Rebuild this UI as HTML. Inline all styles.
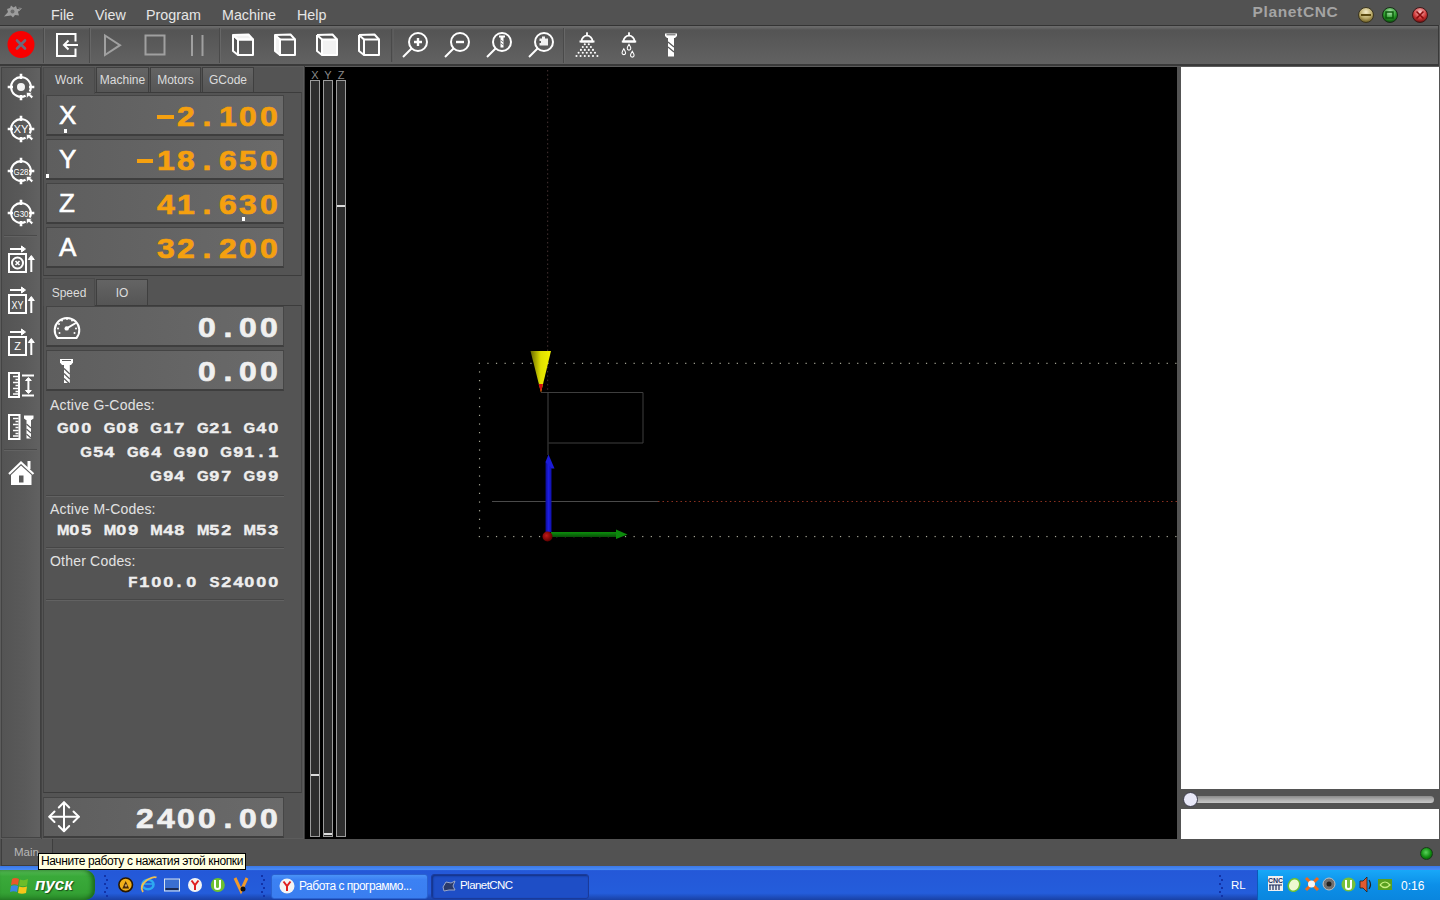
<!DOCTYPE html>
<html><head><meta charset="utf-8">
<style>
*{margin:0;padding:0;box-sizing:border-box}
html,body{width:1440px;height:900px;overflow:hidden;background:#5c5c5c;font-family:"Liberation Sans",sans-serif;position:relative}
.a{position:absolute}
#menubar{left:0;top:0;width:1440px;height:25px;background:#525252}
.mi{position:absolute;top:7px;font-size:14.3px;color:#e6e6e6}
#toolbar{left:0;top:25px;width:1439px;height:41px;border-right:1px solid #3a3a3a;background:linear-gradient(#6a6a6a 0,#6a6a6a 1px,#545454 4px,#5a5a5a 50%,#626262);border-top:1px solid #343434;border-bottom:2px solid #3a3a3a}
.sep{position:absolute;top:3px;width:2px;height:34px;background:#4c4c4c;border-right:1px solid #686868}
#leftcol{left:1px;top:67px;width:40px;height:771px;background:linear-gradient(90deg,#545454,#5a5a5a 60%,#616161);border:1px solid #444;border-right-color:#3e3e3e}
#panel{left:42px;top:67px;width:261px;height:771px;background:#545454}
#view{left:305px;top:67px;width:872px;height:772px;background:#000}
#rightp{left:1177px;top:67px;width:263px;height:772px;background:#535353}
#status{left:0;top:839px;width:1440px;height:27px;background:#525252}
#taskbar{left:0;top:866px;width:1440px;height:34px;background:linear-gradient(#3d81ee,#2458d8 15%,#245ddb 80%,#1941a5)}
.tab{position:absolute;height:26px;background:linear-gradient(#646464,#555);border:1px solid #3f3f3f;border-bottom:none;font-size:12px;color:#dcdcdc;text-align:center;line-height:24px}
.dro{position:absolute;left:46px;width:238px;height:41px;background:linear-gradient(90deg,#5e5e5e,#6a6a6a);border:1px solid #464646;border-top-color:#444;border-bottom:2px solid #3e3e3e}
.lbl{position:absolute;left:12px;top:4px;font-size:26px;line-height:30px;color:#fff;-webkit-text-stroke:0.6px #fff}
.val{position:absolute;right:4px;top:2.5px;font-weight:bold;font-size:28.5px;line-height:34px;color:#f5a00f;white-space:nowrap;-webkit-text-stroke:0.7px currentColor}
.val i,.code i{display:inline-block;text-align:center;font-style:normal}
.val b{display:inline-block;transform:scaleX(1.12)}
.code b{display:inline-block;transform:scaleX(1.2)}
.code b.L{transform:scaleX(1.0)}
.code{position:absolute;right:1161.5px;font-weight:bold;font-size:15px;-webkit-text-stroke:0.4px #eee;color:#eee;text-align:right;white-space:nowrap}
.ctitle{position:absolute;left:50px;font-size:14px;letter-spacing:0.2px;color:#e2e2e2}
.hr{position:absolute;left:46px;width:238px;height:2px;background:#464646;border-bottom:1px solid #626262}
</style></head><body>
<div id="menubar" class="a">
  <span class="mi" style="left:51px">File</span>
  <span class="mi" style="left:95px">View</span>
  <span class="mi" style="left:146px">Program</span>
  <span class="mi" style="left:222px">Machine</span>
  <span class="mi" style="left:297px">Help</span>
  <span class="a" style="left:1252.5px;top:3px;font-size:15.5px;letter-spacing:0.65px;font-weight:bold;color:#a4a4a4">PlanetCNC</span>
  <svg class="a" style="left:1340px;top:0" width="100" height="25" viewBox="1340 0 100 25">
   <defs>
    <radialGradient id="wy" cx="0.5" cy="0.3" r="0.7"><stop offset="0" stop-color="#f4ecc8"/><stop offset="0.6" stop-color="#b8a866"/><stop offset="1" stop-color="#6a5a20"/></radialGradient>
    <radialGradient id="wg" cx="0.5" cy="0.3" r="0.7"><stop offset="0" stop-color="#b8e8b8"/><stop offset="0.6" stop-color="#2a9a2a"/><stop offset="1" stop-color="#0a4a0a"/></radialGradient>
    <radialGradient id="wr" cx="0.5" cy="0.3" r="0.7"><stop offset="0" stop-color="#f8c8c8"/><stop offset="0.6" stop-color="#d03a3a"/><stop offset="1" stop-color="#6a0a0a"/></radialGradient>
   </defs>
   <circle cx="1366" cy="15" r="7.5" fill="url(#wy)" stroke="#3a3420" stroke-width="1"/>
   <rect x="1361" y="14" width="10" height="2" fill="#5a4a10"/>
   <circle cx="1390" cy="15" r="7.5" fill="url(#wg)" stroke="#1a2a1a" stroke-width="1"/>
   <rect x="1386" y="12" width="7" height="6" fill="none" stroke="#0a5a0a" stroke-width="1.5"/>
   <circle cx="1420" cy="15" r="7.5" fill="url(#wr)" stroke="#3a1a1a" stroke-width="1"/>
   <path d="M1416.5 11.5 L1423.5 18.5 M1423.5 11.5 L1416.5 18.5" stroke="#8a0a0a" stroke-width="1.6"/>
  </svg>
  <svg class="a" style="left:0;top:0" width="30" height="22" viewBox="0 0 30 22">
   <path d="M4 16.5 L8 12 L7 9 L10 8 L11 5.5 L13.5 7.5 L16 6 L17 9 L20 9 L18 12 L19 15.5 L15 15 L13 17.5 L11 15.5 Z" fill="#9c9c9c"/>
   <path d="M18.5 8 L21.5 8.5 L19 11" fill="none" stroke="#8a8a8a" stroke-width="1"/>
   <circle cx="12.5" cy="11.5" r="2" fill="#6a6a6a"/>
  </svg>
</div>
<div id="toolbar" class="a"></div>
<svg class="a" style="left:0;top:0" width="720" height="66" viewBox="0 0 720 66">
 <g fill="none" stroke="#fff" stroke-width="2">
  <!-- separators -->
 </g>
 <rect x="43" y="28" width="1" height="35" fill="#4a4a4a"/><rect x="44" y="28" width="1" height="35" fill="#676767"/>
 <rect x="89" y="28" width="1" height="35" fill="#4a4a4a"/><rect x="90" y="28" width="1" height="35" fill="#676767"/>
 <rect x="219" y="28" width="1" height="35" fill="#4a4a4a"/><rect x="220" y="28" width="1" height="35" fill="#676767"/>
 <rect x="391" y="29" width="1.5" height="33" fill="#4a4a4a"/><rect x="392.5" y="29" width="1" height="33" fill="#646464"/>
 <rect x="563" y="28" width="1" height="35" fill="#4a4a4a"/><rect x="564" y="28" width="1" height="35" fill="#676767"/>
 <!-- red stop -->
 <circle cx="21" cy="44.5" r="13.5" fill="#f80000"/>
 <path d="M17 40.5 L25 48.5 M25 40.5 L17 48.5" stroke="#6a6a7c" stroke-width="2.6" stroke-linecap="round"/>
 <!-- exit -->
 <path d="M75.5 41.5 V34 H57 V56 H75.5 V48.5" fill="none" stroke="#fff" stroke-width="2"/>
 <path d="M78 45 H64 M68.5 40.5 L64 45 L68.5 49.5" fill="none" stroke="#fff" stroke-width="2"/>
 <!-- play stop pause (gray) -->
 <path d="M105 35.5 V55 L120 45.2 Z" fill="none" stroke="#a0a0a0" stroke-width="2"/>
 <rect x="145.5" y="35.5" width="19" height="19" fill="none" stroke="#a0a0a0" stroke-width="2"/>
 <path d="M192 35 V56 M202.5 35 V56" stroke="#a0a0a0" stroke-width="2"/>
 <!-- cubes -->
 <g fill="none" stroke="#fff" stroke-width="2" stroke-linejoin="round">
  <g transform="translate(232,33.5)">
   <path d="M1 1.5 L16.5 1 L21 6 L6 6 Z" fill="#f2f2f2"/><path d="M6 6 H21 V21.5 H6 Z"/><path d="M1 1.5 V17.5 L6 21.5 M1 1.5 L6 6"/>
  </g>
  <g transform="translate(274,33.5)">
   <path d="M1 1.5 L6 6 V21.5 L1 17.5 Z" fill="#f2f2f2"/><path d="M6 6 H21 V21.5 H6 Z"/><path d="M1 1.5 L16.5 1 L21 6"/>
  </g>
  <g transform="translate(316,33.5)">
   <path d="M6 6 H21 V21.5 H6 Z" fill="#f2f2f2"/><path d="M1 1.5 L16.5 1 L21 6 M1 1.5 L6 6 M1 1.5 V17.5 L6 21.5"/>
  </g>
  <g transform="translate(358,33.5)">
   <path d="M6 6 H21 V21.5 H6 Z"/><path d="M1 1.5 L16.5 1 L21 6 M1 1.5 L6 6 M1 1.5 V17.5 L6 21.5"/>
  </g>
 </g>
 <!-- magnifiers -->
 <g fill="none" stroke="#fff" stroke-width="2">
  <circle cx="418" cy="42" r="9"/><path d="M411.5 48.5 L403 57"/>
  <circle cx="460" cy="42" r="9"/><path d="M453.5 48.5 L445 57"/>
  <circle cx="502" cy="42" r="9"/><path d="M495.5 48.5 L487 57"/>
  <circle cx="544" cy="42" r="9"/><path d="M537.5 48.5 L529 57"/>
  <path d="M418 38 V46 M414 42 H422" stroke-width="2.4"/>
  <path d="M456 42 H464" stroke-width="2.4"/>
 </g>
 <!-- tool in magnifier -->
 <path d="M499 35.5 H505 V37.5 H503.5 V47.5 H500.5 V37.5 H499 Z" fill="#fff"/>
 <path d="M500.5 40 L503.5 42 M500.5 43 L503.5 45" stroke="#5a5a5a" stroke-width="0.8"/>
 <!-- part in magnifier -->
 <path d="M539.5 38.5 H542 V36.5 H545 V38.5 H548 V45.5 H539.5 V43 H541 V41 H539.5 Z" fill="#f0f0f0"/>
 <!-- shower mist -->
 <path d="M581.5 41.5 A5.5 5.8 0 0 1 592.5 41.5 Z" fill="none" stroke="#fff" stroke-width="1.8"/>
 <path d="M579.5 41.5 H594.5" stroke="#fff" stroke-width="2"/>
 <rect x="586.1" y="32.3" width="1.8" height="3" fill="#fff"/>
 <g fill="#fff"><circle cx="584.8" cy="44.2" r="1.05"/><circle cx="588.8" cy="44.2" r="1.05"/><circle cx="582.8" cy="47" r="1.05"/><circle cx="586.8" cy="47" r="1.05"/><circle cx="590.9" cy="47" r="1.05"/><circle cx="580.9" cy="49.9" r="1.05"/><circle cx="584.8" cy="49.9" r="1.05"/><circle cx="588.8" cy="49.9" r="1.05"/><circle cx="593" cy="49.9" r="1.05"/><circle cx="578.6" cy="52.8" r="1.05"/><circle cx="582.8" cy="52.8" r="1.05"/><circle cx="586.8" cy="52.8" r="1.05"/><circle cx="590.9" cy="52.8" r="1.05"/><circle cx="595" cy="52.8" r="1.05"/><circle cx="576.5" cy="56" r="1.05"/><circle cx="580.6" cy="56" r="1.05"/><circle cx="584.8" cy="56" r="1.05"/><circle cx="588.8" cy="56" r="1.05"/><circle cx="593" cy="56" r="1.05"/><circle cx="597.4" cy="56" r="1.05"/></g>
 <!-- shower flood -->
 <path d="M623.5 41.5 A5.5 5.8 0 0 1 634.5 41.5 Z" fill="none" stroke="#fff" stroke-width="1.8"/>
 <path d="M621.8 41.5 H636.2" stroke="#fff" stroke-width="2"/>
 <rect x="628.1" y="32.3" width="1.8" height="3" fill="#fff"/>
 <g fill="none" stroke="#fff" stroke-width="1.1">
  <path d="M629 44.2 Q631 47.5 630.8 48.3 A1.8 1.8 0 0 1 627.2 48.3 Q627 47.5 629 44.2 Z"/>
  <path d="M623.8 48.7 Q625.8 52 625.6 52.8 A1.8 1.8 0 0 1 622 52.8 Q621.8 52 623.8 48.7 Z"/>
  <path d="M632.3 51.2 Q634.3 54.5 634.1 55.3 A1.8 1.8 0 0 1 630.5 55.3 Q630.3 54.5 632.3 51.2 Z"/>
 </g>
 <!-- end mill -->
 <path d="M665 33.5 H677 V36 L675 38 H667 L665 36 Z" fill="#fff"/>
 <path d="M666.5 34.8 H675.5" stroke="#5a5a5a" stroke-width="1"/>
 <rect x="668" y="38" width="6" height="18.5" fill="#fff"/>
 <path d="M668 42 L674 47 M668 47 L674 52" stroke="#5a5a5a" stroke-width="1.3"/>
</svg>
<div id="leftcol" class="a"></div>
<svg class="a" style="left:0;top:0" width="44" height="500" viewBox="0 0 44 500">
 <g transform="translate(21,87)">
  <path d="M4.6 8.7 A9.85 9.85 0 1 1 8.7 4.6" fill="none" stroke="#fff" stroke-width="2.1"/>
  <path d="M0 -13.3 V-8 M0 8 V13.3 M-13.3 0 H-8 M8 0 H13.3" stroke="#fff" stroke-width="2.6"/>
  <circle cx="0" cy="0" r="4" fill="#f4f4f4"/>
  <path d="M5.5 5.5 H11.2 L9.6 7.1 L12.3 9.8 L10.5 11.6 L7.8 8.9 L5.5 11.2 Z" fill="#fff" stroke="#5a5a5a" stroke-width="0.6"/>
 </g>
 <g transform="translate(21,129)">
  <path d="M4.6 8.7 A9.85 9.85 0 1 1 8.7 4.6" fill="none" stroke="#fff" stroke-width="2.1"/>
  <path d="M0 -13.3 V-8 M0 8 V13.3 M-13.3 0 H-8 M8 0 H13.3" stroke="#fff" stroke-width="2.6"/>
  <text x="0" y="4" font-size="11" fill="#fff" text-anchor="middle" font-family="Liberation Sans" textLength="15" lengthAdjust="spacingAndGlyphs">XY</text>
  <path d="M5.5 5.5 H11.2 L9.6 7.1 L12.3 9.8 L10.5 11.6 L7.8 8.9 L5.5 11.2 Z" fill="#fff" stroke="#5a5a5a" stroke-width="0.6"/>
 </g>
 <g transform="translate(21,171)">
  <path d="M4.6 8.7 A9.85 9.85 0 1 1 8.7 4.6" fill="none" stroke="#fff" stroke-width="2.1"/>
  <path d="M0 -13.3 V-8 M0 8 V13.3 M-13.3 0 H-8 M8 0 H13.3" stroke="#fff" stroke-width="2.6"/>
  <text x="0" y="3.5" font-size="9" fill="#fff" text-anchor="middle" font-family="Liberation Sans" textLength="15" lengthAdjust="spacingAndGlyphs">G28</text>
  <path d="M5.5 5.5 H11.2 L9.6 7.1 L12.3 9.8 L10.5 11.6 L7.8 8.9 L5.5 11.2 Z" fill="#fff" stroke="#5a5a5a" stroke-width="0.6"/>
 </g>
 <g transform="translate(21,213)">
  <path d="M4.6 8.7 A9.85 9.85 0 1 1 8.7 4.6" fill="none" stroke="#fff" stroke-width="2.1"/>
  <path d="M0 -13.3 V-8 M0 8 V13.3 M-13.3 0 H-8 M8 0 H13.3" stroke="#fff" stroke-width="2.6"/>
  <text x="0" y="3.5" font-size="9" fill="#fff" text-anchor="middle" font-family="Liberation Sans" textLength="15" lengthAdjust="spacingAndGlyphs">G30</text>
  <path d="M5.5 5.5 H11.2 L9.6 7.1 L12.3 9.8 L10.5 11.6 L7.8 8.9 L5.5 11.2 Z" fill="#fff" stroke="#5a5a5a" stroke-width="0.6"/>
 </g>
 <rect x="4" y="235" width="33" height="1" fill="#4a4a4a"/><rect x="4" y="236" width="33" height="1" fill="#626262"/>
 <rect x="4" y="449" width="33" height="1" fill="#4a4a4a"/><rect x="4" y="450" width="33" height="1" fill="#626262"/>
 <g fill="none" stroke="#fff" stroke-width="2">
  <!-- icon 5 -->
  <path d="M10 249 H22"/><path d="M21.5 246 L25.5 249 L21.5 252 Z" fill="#fff" stroke-width="1"/>
  <rect x="9" y="254" width="17" height="18"/>
  <circle cx="17.5" cy="263" r="5.5" stroke-width="2"/>
  <path d="M15.5 261 L19.5 265 M19.5 261 L15.5 265" stroke-width="1.6"/>
  <path d="M31.3 259 V272"/><path d="M28.3 259.5 L31.3 255.5 L34.3 259.5 Z" fill="#fff" stroke-width="1"/>
  <!-- icon 6 -->
  <path d="M10 290 H22"/><path d="M21.5 287 L25.5 290 L21.5 293 Z" fill="#fff" stroke-width="1"/>
  <rect x="9" y="295" width="17" height="18"/>
  <path d="M31.3 300 V313"/><path d="M28.3 300.5 L31.3 296.5 L34.3 300.5 Z" fill="#fff" stroke-width="1"/>
  <!-- icon 7 -->
  <path d="M10 332 H22"/><path d="M21.5 329 L25.5 332 L21.5 335 Z" fill="#fff" stroke-width="1"/>
  <rect x="9" y="337" width="17" height="18"/>
  <path d="M31.3 342 V355"/><path d="M28.3 342.5 L31.3 338.5 L34.3 342.5 Z" fill="#fff" stroke-width="1"/>
  <!-- icon 8 ruler -->
  <rect x="9" y="373" width="10" height="24"/>
  <path d="M13 376.5 H18 M15.5 379.5 H18 M13 382.5 H18 M15.5 385.5 H18 M13 388.5 H18 M15.5 391.5 H18 M13 394 H18" stroke-width="1.4"/>
  <path d="M22 375.5 H34 M22 395.5 H34 M28.4 379 V392"/>
  <path d="M25.5 380.5 L28.4 377.5 L31.3 380.5 Z M25.5 390.5 L28.4 393.5 L31.3 390.5 Z" fill="#fff" stroke-width="1"/>
  <!-- icon 9 -->
  <rect x="9" y="415" width="10.5" height="24"/>
  <path d="M13 418.5 H18.5 M15.5 421.5 H18.5 M13 424.5 H18.5 M15.5 427.5 H18.5 M13 430.5 H18.5 M15.5 433.5 H18.5 M13 436 H18.5" stroke-width="1.4"/>
 </g>
 <path d="M24 415.5 H33.5 V418.5 L31.5 420 H26 L24 418.5 Z" fill="#fff"/>
 <rect x="26.5" y="420" width="4.5" height="18.5" fill="#fff"/>
 <path d="M26.5 424 L31 428 M26.5 429 L31 433 M26.5 434 L31 438" stroke="#5a5a5a" stroke-width="1.1"/>
 <!-- house -->
 <path d="M9 474 L21 462.5 L33.5 474" fill="none" stroke="#fff" stroke-width="2.2"/>
 <rect x="27.5" y="461" width="3" height="8" fill="#fff"/>
 <path d="M11 475 L21 465.5 L31.5 475 V485 H11 Z" fill="#fff"/>
 <rect x="19" y="475.5" width="4.5" height="7" fill="#5a5a5a"/>
 <g font-family="Liberation Sans" fill="#fff" text-anchor="middle">
  <text x="17.5" y="308.5" font-size="11" textLength="12" lengthAdjust="spacingAndGlyphs">XY</text>
  <text x="17.5" y="350" font-size="11">Z</text>
 </g>
</svg>
<div id="panel" class="a"></div>
<div class="a" style="left:41px;top:66px;width:264px;height:773px;border-left:1px solid #444;border-right:1px solid #3a3a3a"></div>
<!-- tab row 1 -->
<div class="tab" style="left:43px;top:67px;width:52px;height:27px;padding-top:0;background:#545454;border-color:#4a4a4a;z-index:2">Work</div>
<div class="tab" style="left:96px;top:67px;width:53px;">Machine</div>
<div class="tab" style="left:150px;top:67px;width:51px;">Motors</div>
<div class="tab" style="left:202px;top:67px;width:52px;">GCode</div>
<div class="a" style="left:43px;top:92px;width:259px;height:184px;border:1px solid #444;border-top-color:#3c3c3c;border-bottom-color:#3c3c3c;background:#545454"></div>
<div class="dro" style="top:95px"><span class="lbl">X</span><span class="val"><i style="width:20.6px;position:relative;height:20px"><u style="position:absolute;left:2px;top:9.5px;width:16.5px;height:4px;background:currentColor"></u></i><i style="width:20.6px"><b>2</b></i><i style="width:20.6px"><b>.</b></i><i style="width:20.6px"><b>1</b></i><i style="width:20.6px"><b>0</b></i><i style="width:20.6px"><b>0</b></i></span></div>
<div class="dro" style="top:139px"><span class="lbl">Y</span><span class="val"><i style="width:20.6px;position:relative;height:20px"><u style="position:absolute;left:2px;top:9.5px;width:16.5px;height:4px;background:currentColor"></u></i><i style="width:20.6px"><b>1</b></i><i style="width:20.6px"><b>8</b></i><i style="width:20.6px"><b>.</b></i><i style="width:20.6px"><b>6</b></i><i style="width:20.6px"><b>5</b></i><i style="width:20.6px"><b>0</b></i></span></div>
<div class="dro" style="top:183px"><span class="lbl">Z</span><span class="val"><i style="width:20.6px"><b>4</b></i><i style="width:20.6px"><b>1</b></i><i style="width:20.6px"><b>.</b></i><i style="width:20.6px"><b>6</b></i><i style="width:20.6px"><b>3</b></i><i style="width:20.6px"><b>0</b></i></span></div>
<div class="dro" style="top:227px"><span class="lbl">A</span><span class="val"><i style="width:20.6px"><b>3</b></i><i style="width:20.6px"><b>2</b></i><i style="width:20.6px"><b>.</b></i><i style="width:20.6px"><b>2</b></i><i style="width:20.6px"><b>0</b></i><i style="width:20.6px"><b>0</b></i></span></div>
<div class="a" style="left:64px;top:129px;width:3px;height:4px;background:#fff;z-index:5"></div>
<div class="a" style="left:46px;top:174px;width:3px;height:4px;background:#fff;z-index:5"></div>
<div class="a" style="left:242px;top:217px;width:3px;height:4px;background:#fff;z-index:5"></div>
<!-- tab row 2 -->
<div class="tab" style="left:43px;top:278px;width:52px;height:28px;padding-top:2px;background:#545454;border-color:#4a4a4a;z-index:2">Speed</div>
<div class="tab" style="left:96px;top:279px;width:52px;padding-top:1px">IO</div>
<div class="a" style="left:43px;top:305px;width:259px;height:488px;border:1px solid #444;border-top-color:#3c3c3c;border-bottom-color:#3c3c3c;background:#545454"></div>
<svg class="a" style="left:50px;top:310px;z-index:3" width="35" height="80" viewBox="50 310 35 80">
 <path d="M57.5 338 A12.3 12.3 0 1 1 76.5 338 Z" fill="none" stroke="#fff" stroke-width="2" stroke-linejoin="round"/>
 <g fill="#fff"><circle cx="67" cy="319" r="1"/><circle cx="62" cy="320.5" r="1"/><circle cx="72" cy="320.5" r="1"/><circle cx="59" cy="324" r="1"/><circle cx="58" cy="328.5" r="1"/><circle cx="59.5" cy="333" r="1"/><circle cx="76" cy="328.5" r="1"/><circle cx="74.5" cy="333" r="1"/></g>
 <circle cx="66.7" cy="328.4" r="2.2" fill="#fff"/>
 <path d="M66.7 328.4 L75 323.5" stroke="#fff" stroke-width="2" stroke-linecap="round"/>
 <path d="M60 359 H73 V362.5 L71 365 H62 L60 362.5 Z" fill="#fff"/>
 <path d="M62 360.5 H71" stroke="#5e5e5e" stroke-width="1"/>
 <rect x="64" y="365" width="5.8" height="18" fill="#fff"/>
 <path d="M64 368.5 L69.8 374 M64 373.5 L69.8 379 M64 378.5 L69.8 384" stroke="#5e5e5e" stroke-width="1.3"/>
</svg>
<svg class="a" style="left:44px;top:796px;z-index:3" width="40" height="40" viewBox="44 796 40 40">
 <g fill="none" stroke="#fff" stroke-width="2" stroke-linecap="round" stroke-linejoin="round">
  <path d="M64 802.5 V831 M49.5 816.8 H78.8"/>
  <path d="M58.8 807.5 L64 802.3 L69.2 807.5 M58.8 826 L64 831.2 L69.2 826 M54.5 811.5 L49.3 816.8 L54.5 822 M73.5 811.5 L78.8 816.8 L73.5 822"/>
 </g>
</svg>
<div class="dro" style="top:306px"><span class="val" style="color:#f0f0f0"><i style="width:20.6px"><b>0</b></i><i style="width:20.6px"><b>.</b></i><i style="width:20.6px"><b>0</b></i><i style="width:20.6px"><b>0</b></i></span></div>
<div class="dro" style="top:350px"><span class="val" style="color:#f0f0f0"><i style="width:20.6px"><b>0</b></i><i style="width:20.6px"><b>.</b></i><i style="width:20.6px"><b>0</b></i><i style="width:20.6px"><b>0</b></i></span></div>
<span class="ctitle" style="top:397px">Active G-Codes:</span>
<div class="code" style="top:416px;line-height:24px"><i style="width:11.67px"><b class="L">G</b></i><i style="width:11.67px"><b>0</b></i><i style="width:11.67px"><b>0</b></i><i style="width:11.67px"> </i><i style="width:11.67px"><b class="L">G</b></i><i style="width:11.67px"><b>0</b></i><i style="width:11.67px"><b>8</b></i><i style="width:11.67px"> </i><i style="width:11.67px"><b class="L">G</b></i><i style="width:11.67px"><b>1</b></i><i style="width:11.67px"><b>7</b></i><i style="width:11.67px"> </i><i style="width:11.67px"><b class="L">G</b></i><i style="width:11.67px"><b>2</b></i><i style="width:11.67px"><b>1</b></i><i style="width:11.67px"> </i><i style="width:11.67px"><b class="L">G</b></i><i style="width:11.67px"><b>4</b></i><i style="width:11.67px"><b>0</b></i><br><i style="width:11.67px"><b class="L">G</b></i><i style="width:11.67px"><b>5</b></i><i style="width:11.67px"><b>4</b></i><i style="width:11.67px"> </i><i style="width:11.67px"><b class="L">G</b></i><i style="width:11.67px"><b>6</b></i><i style="width:11.67px"><b>4</b></i><i style="width:11.67px"> </i><i style="width:11.67px"><b class="L">G</b></i><i style="width:11.67px"><b>9</b></i><i style="width:11.67px"><b>0</b></i><i style="width:11.67px"> </i><i style="width:11.67px"><b class="L">G</b></i><i style="width:11.67px"><b>9</b></i><i style="width:11.67px"><b>1</b></i><i style="width:11.67px"><b>.</b></i><i style="width:11.67px"><b>1</b></i><br><i style="width:11.67px"><b class="L">G</b></i><i style="width:11.67px"><b>9</b></i><i style="width:11.67px"><b>4</b></i><i style="width:11.67px"> </i><i style="width:11.67px"><b class="L">G</b></i><i style="width:11.67px"><b>9</b></i><i style="width:11.67px"><b>7</b></i><i style="width:11.67px"> </i><i style="width:11.67px"><b class="L">G</b></i><i style="width:11.67px"><b>9</b></i><i style="width:11.67px"><b>9</b></i></div>
<div class="hr" style="top:495px"></div>
<span class="ctitle" style="top:501px">Active M-Codes:</span>
<div class="code" style="top:518px;line-height:24px"><i style="width:11.67px"><b class="L">M</b></i><i style="width:11.67px"><b>0</b></i><i style="width:11.67px"><b>5</b></i><i style="width:11.67px"> </i><i style="width:11.67px"><b class="L">M</b></i><i style="width:11.67px"><b>0</b></i><i style="width:11.67px"><b>9</b></i><i style="width:11.67px"> </i><i style="width:11.67px"><b class="L">M</b></i><i style="width:11.67px"><b>4</b></i><i style="width:11.67px"><b>8</b></i><i style="width:11.67px"> </i><i style="width:11.67px"><b class="L">M</b></i><i style="width:11.67px"><b>5</b></i><i style="width:11.67px"><b>2</b></i><i style="width:11.67px"> </i><i style="width:11.67px"><b class="L">M</b></i><i style="width:11.67px"><b>5</b></i><i style="width:11.67px"><b>3</b></i></div>
<div class="hr" style="top:547px"></div>
<span class="ctitle" style="top:553px">Other Codes:</span>
<div class="code" style="top:570px;line-height:24px"><i style="width:11.67px"><b class="L">F</b></i><i style="width:11.67px"><b>1</b></i><i style="width:11.67px"><b>0</b></i><i style="width:11.67px"><b>0</b></i><i style="width:11.67px"><b>.</b></i><i style="width:11.67px"><b>0</b></i><i style="width:11.67px"> </i><i style="width:11.67px"><b class="L">S</b></i><i style="width:11.67px"><b>2</b></i><i style="width:11.67px"><b>4</b></i><i style="width:11.67px"><b>0</b></i><i style="width:11.67px"><b>0</b></i><i style="width:11.67px"><b>0</b></i></div>
<div class="hr" style="top:599px"></div>
<div class="dro" style="left:43px;width:241px;top:797px"><span class="val" style="color:#f0f0f0"><i style="width:20.6px"><b>2</b></i><i style="width:20.6px"><b>4</b></i><i style="width:20.6px"><b>0</b></i><i style="width:20.6px"><b>0</b></i><i style="width:20.6px"><b>.</b></i><i style="width:20.6px"><b>0</b></i><i style="width:20.6px"><b>0</b></i></span></div>

<div id="view" class="a"></div>
<svg class="a" style="left:305px;top:67px" width="872" height="772" viewBox="305 67 872 772">
 <!-- axis bars -->
 <g fill="#2e2e2e" stroke="#9c9c9c" stroke-width="1">
  <rect x="310.5" y="80.5" width="9" height="756"/>
  <rect x="323.5" y="80.5" width="9" height="756"/>
  <rect x="336.5" y="80.5" width="9" height="756"/>
 </g>
 <rect x="311" y="774" width="8" height="2" fill="#ddd"/>
 <rect x="324" y="833" width="8" height="2" fill="#ddd"/>
 <rect x="337" y="205" width="8" height="2" fill="#ddd"/>
 <g font-family="Liberation Sans" font-size="11" fill="#8a8a8a" text-anchor="middle">
  <text x="315" y="79">X</text><text x="328" y="79">Y</text><text x="341" y="79">Z</text>
 </g>
 <g fill="#a8a898"><rect x="478.75" y="362.75" width="1.2" height="1.2"/><rect x="478.75" y="535.95" width="1.2" height="1.2"/><rect x="487.35" y="362.75" width="1.2" height="1.2"/><rect x="487.35" y="535.95" width="1.2" height="1.2"/><rect x="495.95" y="362.75" width="1.2" height="1.2"/><rect x="495.95" y="535.95" width="1.2" height="1.2"/><rect x="504.55" y="362.75" width="1.2" height="1.2"/><rect x="504.55" y="535.95" width="1.2" height="1.2"/><rect x="513.15" y="362.75" width="1.2" height="1.2"/><rect x="513.15" y="535.95" width="1.2" height="1.2"/><rect x="521.75" y="362.75" width="1.2" height="1.2"/><rect x="521.75" y="535.95" width="1.2" height="1.2"/><rect x="530.35" y="362.75" width="1.2" height="1.2"/><rect x="530.35" y="535.95" width="1.2" height="1.2"/><rect x="538.95" y="362.75" width="1.2" height="1.2"/><rect x="538.95" y="535.95" width="1.2" height="1.2"/><rect x="547.55" y="362.75" width="1.2" height="1.2"/><rect x="547.55" y="535.95" width="1.2" height="1.2"/><rect x="556.15" y="362.75" width="1.2" height="1.2"/><rect x="556.15" y="535.95" width="1.2" height="1.2"/><rect x="564.75" y="362.75" width="1.2" height="1.2"/><rect x="564.75" y="535.95" width="1.2" height="1.2"/><rect x="573.35" y="362.75" width="1.2" height="1.2"/><rect x="573.35" y="535.95" width="1.2" height="1.2"/><rect x="581.95" y="362.75" width="1.2" height="1.2"/><rect x="581.95" y="535.95" width="1.2" height="1.2"/><rect x="590.55" y="362.75" width="1.2" height="1.2"/><rect x="590.55" y="535.95" width="1.2" height="1.2"/><rect x="599.15" y="362.75" width="1.2" height="1.2"/><rect x="599.15" y="535.95" width="1.2" height="1.2"/><rect x="607.75" y="362.75" width="1.2" height="1.2"/><rect x="607.75" y="535.95" width="1.2" height="1.2"/><rect x="616.35" y="362.75" width="1.2" height="1.2"/><rect x="616.35" y="535.95" width="1.2" height="1.2"/><rect x="624.95" y="362.75" width="1.2" height="1.2"/><rect x="624.95" y="535.95" width="1.2" height="1.2"/><rect x="633.55" y="362.75" width="1.2" height="1.2"/><rect x="633.55" y="535.95" width="1.2" height="1.2"/><rect x="642.15" y="362.75" width="1.2" height="1.2"/><rect x="642.15" y="535.95" width="1.2" height="1.2"/><rect x="650.75" y="362.75" width="1.2" height="1.2"/><rect x="650.75" y="535.95" width="1.2" height="1.2"/><rect x="659.35" y="362.75" width="1.2" height="1.2"/><rect x="659.35" y="535.95" width="1.2" height="1.2"/><rect x="667.95" y="362.75" width="1.2" height="1.2"/><rect x="667.95" y="535.95" width="1.2" height="1.2"/><rect x="676.55" y="362.75" width="1.2" height="1.2"/><rect x="676.55" y="535.95" width="1.2" height="1.2"/><rect x="685.15" y="362.75" width="1.2" height="1.2"/><rect x="685.15" y="535.95" width="1.2" height="1.2"/><rect x="693.75" y="362.75" width="1.2" height="1.2"/><rect x="693.75" y="535.95" width="1.2" height="1.2"/><rect x="702.35" y="362.75" width="1.2" height="1.2"/><rect x="702.35" y="535.95" width="1.2" height="1.2"/><rect x="710.95" y="362.75" width="1.2" height="1.2"/><rect x="710.95" y="535.95" width="1.2" height="1.2"/><rect x="719.55" y="362.75" width="1.2" height="1.2"/><rect x="719.55" y="535.95" width="1.2" height="1.2"/><rect x="728.15" y="362.75" width="1.2" height="1.2"/><rect x="728.15" y="535.95" width="1.2" height="1.2"/><rect x="736.75" y="362.75" width="1.2" height="1.2"/><rect x="736.75" y="535.95" width="1.2" height="1.2"/><rect x="745.35" y="362.75" width="1.2" height="1.2"/><rect x="745.35" y="535.95" width="1.2" height="1.2"/><rect x="753.95" y="362.75" width="1.2" height="1.2"/><rect x="753.95" y="535.95" width="1.2" height="1.2"/><rect x="762.55" y="362.75" width="1.2" height="1.2"/><rect x="762.55" y="535.95" width="1.2" height="1.2"/><rect x="771.15" y="362.75" width="1.2" height="1.2"/><rect x="771.15" y="535.95" width="1.2" height="1.2"/><rect x="779.75" y="362.75" width="1.2" height="1.2"/><rect x="779.75" y="535.95" width="1.2" height="1.2"/><rect x="788.35" y="362.75" width="1.2" height="1.2"/><rect x="788.35" y="535.95" width="1.2" height="1.2"/><rect x="796.95" y="362.75" width="1.2" height="1.2"/><rect x="796.95" y="535.95" width="1.2" height="1.2"/><rect x="805.55" y="362.75" width="1.2" height="1.2"/><rect x="805.55" y="535.95" width="1.2" height="1.2"/><rect x="814.15" y="362.75" width="1.2" height="1.2"/><rect x="814.15" y="535.95" width="1.2" height="1.2"/><rect x="822.75" y="362.75" width="1.2" height="1.2"/><rect x="822.75" y="535.95" width="1.2" height="1.2"/><rect x="831.35" y="362.75" width="1.2" height="1.2"/><rect x="831.35" y="535.95" width="1.2" height="1.2"/><rect x="839.95" y="362.75" width="1.2" height="1.2"/><rect x="839.95" y="535.95" width="1.2" height="1.2"/><rect x="848.55" y="362.75" width="1.2" height="1.2"/><rect x="848.55" y="535.95" width="1.2" height="1.2"/><rect x="857.15" y="362.75" width="1.2" height="1.2"/><rect x="857.15" y="535.95" width="1.2" height="1.2"/><rect x="865.75" y="362.75" width="1.2" height="1.2"/><rect x="865.75" y="535.95" width="1.2" height="1.2"/><rect x="874.35" y="362.75" width="1.2" height="1.2"/><rect x="874.35" y="535.95" width="1.2" height="1.2"/><rect x="882.95" y="362.75" width="1.2" height="1.2"/><rect x="882.95" y="535.95" width="1.2" height="1.2"/><rect x="891.55" y="362.75" width="1.2" height="1.2"/><rect x="891.55" y="535.95" width="1.2" height="1.2"/><rect x="900.15" y="362.75" width="1.2" height="1.2"/><rect x="900.15" y="535.95" width="1.2" height="1.2"/><rect x="908.75" y="362.75" width="1.2" height="1.2"/><rect x="908.75" y="535.95" width="1.2" height="1.2"/><rect x="917.35" y="362.75" width="1.2" height="1.2"/><rect x="917.35" y="535.95" width="1.2" height="1.2"/><rect x="925.95" y="362.75" width="1.2" height="1.2"/><rect x="925.95" y="535.95" width="1.2" height="1.2"/><rect x="934.55" y="362.75" width="1.2" height="1.2"/><rect x="934.55" y="535.95" width="1.2" height="1.2"/><rect x="943.15" y="362.75" width="1.2" height="1.2"/><rect x="943.15" y="535.95" width="1.2" height="1.2"/><rect x="951.75" y="362.75" width="1.2" height="1.2"/><rect x="951.75" y="535.95" width="1.2" height="1.2"/><rect x="960.35" y="362.75" width="1.2" height="1.2"/><rect x="960.35" y="535.95" width="1.2" height="1.2"/><rect x="968.95" y="362.75" width="1.2" height="1.2"/><rect x="968.95" y="535.95" width="1.2" height="1.2"/><rect x="977.55" y="362.75" width="1.2" height="1.2"/><rect x="977.55" y="535.95" width="1.2" height="1.2"/><rect x="986.15" y="362.75" width="1.2" height="1.2"/><rect x="986.15" y="535.95" width="1.2" height="1.2"/><rect x="994.75" y="362.75" width="1.2" height="1.2"/><rect x="994.75" y="535.95" width="1.2" height="1.2"/><rect x="1003.35" y="362.75" width="1.2" height="1.2"/><rect x="1003.35" y="535.95" width="1.2" height="1.2"/><rect x="1011.95" y="362.75" width="1.2" height="1.2"/><rect x="1011.95" y="535.95" width="1.2" height="1.2"/><rect x="1020.55" y="362.75" width="1.2" height="1.2"/><rect x="1020.55" y="535.95" width="1.2" height="1.2"/><rect x="1029.15" y="362.75" width="1.2" height="1.2"/><rect x="1029.15" y="535.95" width="1.2" height="1.2"/><rect x="1037.75" y="362.75" width="1.2" height="1.2"/><rect x="1037.75" y="535.95" width="1.2" height="1.2"/><rect x="1046.35" y="362.75" width="1.2" height="1.2"/><rect x="1046.35" y="535.95" width="1.2" height="1.2"/><rect x="1054.95" y="362.75" width="1.2" height="1.2"/><rect x="1054.95" y="535.95" width="1.2" height="1.2"/><rect x="1063.55" y="362.75" width="1.2" height="1.2"/><rect x="1063.55" y="535.95" width="1.2" height="1.2"/><rect x="1072.15" y="362.75" width="1.2" height="1.2"/><rect x="1072.15" y="535.95" width="1.2" height="1.2"/><rect x="1080.75" y="362.75" width="1.2" height="1.2"/><rect x="1080.75" y="535.95" width="1.2" height="1.2"/><rect x="1089.35" y="362.75" width="1.2" height="1.2"/><rect x="1089.35" y="535.95" width="1.2" height="1.2"/><rect x="1097.95" y="362.75" width="1.2" height="1.2"/><rect x="1097.95" y="535.95" width="1.2" height="1.2"/><rect x="1106.55" y="362.75" width="1.2" height="1.2"/><rect x="1106.55" y="535.95" width="1.2" height="1.2"/><rect x="1115.15" y="362.75" width="1.2" height="1.2"/><rect x="1115.15" y="535.95" width="1.2" height="1.2"/><rect x="1123.75" y="362.75" width="1.2" height="1.2"/><rect x="1123.75" y="535.95" width="1.2" height="1.2"/><rect x="1132.35" y="362.75" width="1.2" height="1.2"/><rect x="1132.35" y="535.95" width="1.2" height="1.2"/><rect x="1140.95" y="362.75" width="1.2" height="1.2"/><rect x="1140.95" y="535.95" width="1.2" height="1.2"/><rect x="1149.55" y="362.75" width="1.2" height="1.2"/><rect x="1149.55" y="535.95" width="1.2" height="1.2"/><rect x="1158.15" y="362.75" width="1.2" height="1.2"/><rect x="1158.15" y="535.95" width="1.2" height="1.2"/><rect x="1166.65" y="362.75" width="1.2" height="1.2"/><rect x="1166.65" y="535.95" width="1.2" height="1.2"/><rect x="1175.25" y="362.75" width="1.2" height="1.2"/><rect x="1175.25" y="535.95" width="1.2" height="1.2"/><rect x="478.95" y="371.35" width="1.2" height="1.2"/><rect x="478.95" y="380.05" width="1.2" height="1.2"/><rect x="478.95" y="388.75" width="1.2" height="1.2"/><rect x="478.95" y="397.45" width="1.2" height="1.2"/><rect x="478.95" y="406.05" width="1.2" height="1.2"/><rect x="478.95" y="414.75" width="1.2" height="1.2"/><rect x="478.95" y="423.45" width="1.2" height="1.2"/><rect x="478.95" y="432.05" width="1.2" height="1.2"/><rect x="478.95" y="440.75" width="1.2" height="1.2"/><rect x="478.95" y="449.45" width="1.2" height="1.2"/><rect x="478.95" y="458.15" width="1.2" height="1.2"/><rect x="478.95" y="466.75" width="1.2" height="1.2"/><rect x="478.95" y="475.45" width="1.2" height="1.2"/><rect x="478.95" y="484.15" width="1.2" height="1.2"/><rect x="478.95" y="492.75" width="1.2" height="1.2"/><rect x="478.95" y="501.45" width="1.2" height="1.2"/><rect x="478.95" y="510.15" width="1.2" height="1.2"/><rect x="478.95" y="518.75" width="1.2" height="1.2"/><rect x="478.95" y="527.45" width="1.2" height="1.2"/></g>
 <g fill="#8a3020"><rect x="658.0" y="501" width="1.5" height="1" /><rect x="662.5" y="501" width="1.5" height="1" /><rect x="667.0" y="501" width="1.5" height="1" /><rect x="671.5" y="501" width="1.5" height="1" /><rect x="676.0" y="501" width="1.5" height="1" /><rect x="680.5" y="501" width="1.5" height="1" /><rect x="685.0" y="501" width="1.5" height="1" /><rect x="689.5" y="501" width="1.5" height="1" /><rect x="694.0" y="501" width="1.5" height="1" /><rect x="698.5" y="501" width="1.5" height="1" /><rect x="703.0" y="501" width="1.5" height="1" /><rect x="707.5" y="501" width="1.5" height="1" /><rect x="712.0" y="501" width="1.5" height="1" /><rect x="716.5" y="501" width="1.5" height="1" /><rect x="721.0" y="501" width="1.5" height="1" /><rect x="725.5" y="501" width="1.5" height="1" /><rect x="730.0" y="501" width="1.5" height="1" /><rect x="734.5" y="501" width="1.5" height="1" /><rect x="739.0" y="501" width="1.5" height="1" /><rect x="743.5" y="501" width="1.5" height="1" /><rect x="748.0" y="501" width="1.5" height="1" /><rect x="752.5" y="501" width="1.5" height="1" /><rect x="757.0" y="501" width="1.5" height="1" /><rect x="761.5" y="501" width="1.5" height="1" /><rect x="766.0" y="501" width="1.5" height="1" /><rect x="770.5" y="501" width="1.5" height="1" /><rect x="775.0" y="501" width="1.5" height="1" /><rect x="779.5" y="501" width="1.5" height="1" /><rect x="784.0" y="501" width="1.5" height="1" /><rect x="788.5" y="501" width="1.5" height="1" /><rect x="793.0" y="501" width="1.5" height="1" /><rect x="797.5" y="501" width="1.5" height="1" /><rect x="802.0" y="501" width="1.5" height="1" /><rect x="806.5" y="501" width="1.5" height="1" /><rect x="811.0" y="501" width="1.5" height="1" /><rect x="815.5" y="501" width="1.5" height="1" /><rect x="820.0" y="501" width="1.5" height="1" /><rect x="824.5" y="501" width="1.5" height="1" /><rect x="829.0" y="501" width="1.5" height="1" /><rect x="833.5" y="501" width="1.5" height="1" /><rect x="838.0" y="501" width="1.5" height="1" /><rect x="842.5" y="501" width="1.5" height="1" /><rect x="847.0" y="501" width="1.5" height="1" /><rect x="851.5" y="501" width="1.5" height="1" /><rect x="856.0" y="501" width="1.5" height="1" /><rect x="860.5" y="501" width="1.5" height="1" /><rect x="865.0" y="501" width="1.5" height="1" /><rect x="869.5" y="501" width="1.5" height="1" /><rect x="874.0" y="501" width="1.5" height="1" /><rect x="878.5" y="501" width="1.5" height="1" /><rect x="883.0" y="501" width="1.5" height="1" /><rect x="887.5" y="501" width="1.5" height="1" /><rect x="892.0" y="501" width="1.5" height="1" /><rect x="896.5" y="501" width="1.5" height="1" /><rect x="901.0" y="501" width="1.5" height="1" /><rect x="905.5" y="501" width="1.5" height="1" /><rect x="910.0" y="501" width="1.5" height="1" /><rect x="914.5" y="501" width="1.5" height="1" /><rect x="919.0" y="501" width="1.5" height="1" /><rect x="923.5" y="501" width="1.5" height="1" /><rect x="928.0" y="501" width="1.5" height="1" /><rect x="932.5" y="501" width="1.5" height="1" /><rect x="937.0" y="501" width="1.5" height="1" /><rect x="941.5" y="501" width="1.5" height="1" /><rect x="946.0" y="501" width="1.5" height="1" /><rect x="950.5" y="501" width="1.5" height="1" /><rect x="955.0" y="501" width="1.5" height="1" /><rect x="959.5" y="501" width="1.5" height="1" /><rect x="964.0" y="501" width="1.5" height="1" /><rect x="968.5" y="501" width="1.5" height="1" /><rect x="973.0" y="501" width="1.5" height="1" /><rect x="977.5" y="501" width="1.5" height="1" /><rect x="982.0" y="501" width="1.5" height="1" /><rect x="986.5" y="501" width="1.5" height="1" /><rect x="991.0" y="501" width="1.5" height="1" /><rect x="995.5" y="501" width="1.5" height="1" /><rect x="1000.0" y="501" width="1.5" height="1" /><rect x="1004.5" y="501" width="1.5" height="1" /><rect x="1009.0" y="501" width="1.5" height="1" /><rect x="1013.5" y="501" width="1.5" height="1" /><rect x="1018.0" y="501" width="1.5" height="1" /><rect x="1022.5" y="501" width="1.5" height="1" /><rect x="1027.0" y="501" width="1.5" height="1" /><rect x="1031.5" y="501" width="1.5" height="1" /><rect x="1036.0" y="501" width="1.5" height="1" /><rect x="1040.5" y="501" width="1.5" height="1" /><rect x="1045.0" y="501" width="1.5" height="1" /><rect x="1049.5" y="501" width="1.5" height="1" /><rect x="1054.0" y="501" width="1.5" height="1" /><rect x="1058.5" y="501" width="1.5" height="1" /><rect x="1063.0" y="501" width="1.5" height="1" /><rect x="1067.5" y="501" width="1.5" height="1" /><rect x="1072.0" y="501" width="1.5" height="1" /><rect x="1076.5" y="501" width="1.5" height="1" /><rect x="1081.0" y="501" width="1.5" height="1" /><rect x="1085.5" y="501" width="1.5" height="1" /><rect x="1090.0" y="501" width="1.5" height="1" /><rect x="1094.5" y="501" width="1.5" height="1" /><rect x="1099.0" y="501" width="1.5" height="1" /><rect x="1103.5" y="501" width="1.5" height="1" /><rect x="1108.0" y="501" width="1.5" height="1" /><rect x="1112.5" y="501" width="1.5" height="1" /><rect x="1117.0" y="501" width="1.5" height="1" /><rect x="1121.5" y="501" width="1.5" height="1" /><rect x="1126.0" y="501" width="1.5" height="1" /><rect x="1130.5" y="501" width="1.5" height="1" /><rect x="1135.0" y="501" width="1.5" height="1" /><rect x="1139.5" y="501" width="1.5" height="1" /><rect x="1144.0" y="501" width="1.5" height="1" /><rect x="1148.5" y="501" width="1.5" height="1" /><rect x="1153.0" y="501" width="1.5" height="1" /><rect x="1157.5" y="501" width="1.5" height="1" /><rect x="1162.0" y="501" width="1.5" height="1" /><rect x="1166.5" y="501" width="1.5" height="1" /><rect x="1171.0" y="501" width="1.5" height="1" /><rect x="1175.5" y="501" width="1.5" height="1" /></g>
 <g fill="#3a2a2a"><rect x="547" y="70.0" width="1.2" height="1.5"/><rect x="547" y="74.3" width="1.2" height="1.5"/><rect x="547" y="78.6" width="1.2" height="1.5"/><rect x="547" y="82.9" width="1.2" height="1.5"/><rect x="547" y="87.2" width="1.2" height="1.5"/><rect x="547" y="91.5" width="1.2" height="1.5"/><rect x="547" y="95.8" width="1.2" height="1.5"/><rect x="547" y="100.1" width="1.2" height="1.5"/><rect x="547" y="104.4" width="1.2" height="1.5"/><rect x="547" y="108.7" width="1.2" height="1.5"/><rect x="547" y="113.0" width="1.2" height="1.5"/><rect x="547" y="117.3" width="1.2" height="1.5"/><rect x="547" y="121.6" width="1.2" height="1.5"/><rect x="547" y="125.9" width="1.2" height="1.5"/><rect x="547" y="130.2" width="1.2" height="1.5"/><rect x="547" y="134.5" width="1.2" height="1.5"/><rect x="547" y="138.8" width="1.2" height="1.5"/><rect x="547" y="143.1" width="1.2" height="1.5"/><rect x="547" y="147.4" width="1.2" height="1.5"/><rect x="547" y="151.7" width="1.2" height="1.5"/><rect x="547" y="156.0" width="1.2" height="1.5"/><rect x="547" y="160.3" width="1.2" height="1.5"/><rect x="547" y="164.6" width="1.2" height="1.5"/><rect x="547" y="168.9" width="1.2" height="1.5"/><rect x="547" y="173.2" width="1.2" height="1.5"/><rect x="547" y="177.5" width="1.2" height="1.5"/><rect x="547" y="181.8" width="1.2" height="1.5"/><rect x="547" y="186.1" width="1.2" height="1.5"/><rect x="547" y="190.4" width="1.2" height="1.5"/><rect x="547" y="194.7" width="1.2" height="1.5"/><rect x="547" y="199.0" width="1.2" height="1.5"/><rect x="547" y="203.3" width="1.2" height="1.5"/><rect x="547" y="207.6" width="1.2" height="1.5"/><rect x="547" y="211.9" width="1.2" height="1.5"/><rect x="547" y="216.2" width="1.2" height="1.5"/><rect x="547" y="220.5" width="1.2" height="1.5"/><rect x="547" y="224.8" width="1.2" height="1.5"/><rect x="547" y="229.1" width="1.2" height="1.5"/><rect x="547" y="233.4" width="1.2" height="1.5"/><rect x="547" y="237.7" width="1.2" height="1.5"/><rect x="547" y="242.0" width="1.2" height="1.5"/><rect x="547" y="246.3" width="1.2" height="1.5"/><rect x="547" y="250.6" width="1.2" height="1.5"/><rect x="547" y="254.9" width="1.2" height="1.5"/><rect x="547" y="259.2" width="1.2" height="1.5"/><rect x="547" y="263.5" width="1.2" height="1.5"/><rect x="547" y="267.8" width="1.2" height="1.5"/><rect x="547" y="272.1" width="1.2" height="1.5"/><rect x="547" y="276.4" width="1.2" height="1.5"/><rect x="547" y="280.7" width="1.2" height="1.5"/><rect x="547" y="285.0" width="1.2" height="1.5"/><rect x="547" y="289.3" width="1.2" height="1.5"/><rect x="547" y="293.6" width="1.2" height="1.5"/><rect x="547" y="297.9" width="1.2" height="1.5"/><rect x="547" y="302.2" width="1.2" height="1.5"/><rect x="547" y="306.5" width="1.2" height="1.5"/><rect x="547" y="310.8" width="1.2" height="1.5"/><rect x="547" y="315.1" width="1.2" height="1.5"/><rect x="547" y="319.4" width="1.2" height="1.5"/><rect x="547" y="323.7" width="1.2" height="1.5"/><rect x="547" y="328.0" width="1.2" height="1.5"/><rect x="547" y="332.3" width="1.2" height="1.5"/><rect x="547" y="336.6" width="1.2" height="1.5"/><rect x="547" y="340.9" width="1.2" height="1.5"/><rect x="547" y="345.2" width="1.2" height="1.5"/><rect x="547" y="349.5" width="1.2" height="1.5"/><rect x="547" y="353.8" width="1.2" height="1.5"/><rect x="547" y="358.1" width="1.2" height="1.5"/><rect x="547" y="362.4" width="1.2" height="1.5"/><rect x="547" y="366.7" width="1.2" height="1.5"/><rect x="547" y="371.0" width="1.2" height="1.5"/><rect x="547" y="375.3" width="1.2" height="1.5"/><rect x="547" y="379.6" width="1.2" height="1.5"/><rect x="547" y="383.9" width="1.2" height="1.5"/><rect x="547" y="388.2" width="1.2" height="1.5"/></g>
 <!-- horizontal gray line -->
 <rect x="492" y="501" width="166" height="1" fill="#4a4a4a"/>
 <!-- rectangle -->
 <path d="M541 392.5 H643 V443 H548.5" fill="none" stroke="#3e3e3e" stroke-width="1"/>
 <rect x="547.5" y="392" width="1" height="63" fill="#444"/>
 <!-- cone -->
 <defs>
  <linearGradient id="cg" x1="0" x2="1" y1="0" y2="0">
   <stop offset="0" stop-color="#6a6a00"/><stop offset="0.5" stop-color="#e0e000"/><stop offset="1" stop-color="#f2f200"/>
  </linearGradient>
  <linearGradient id="bg" x1="0" x2="1"><stop offset="0" stop-color="#0c0c90"/><stop offset="0.5" stop-color="#1c1ce0"/><stop offset="1" stop-color="#1010a8"/></linearGradient>
  <linearGradient id="gg" x1="0" x2="0" y1="0" y2="1"><stop offset="0" stop-color="#0c900c"/><stop offset="1" stop-color="#085008"/></linearGradient>
  <radialGradient id="rg" cx="0.4" cy="0.4" r="0.6"><stop offset="0" stop-color="#c01818"/><stop offset="1" stop-color="#600000"/></radialGradient>
 </defs>
 <path d="M530.5 351 L551 351 L541 392.5 Z" fill="url(#cg)"/>
 <path d="M538.5 384 L543 384 L541 392.5 Z" fill="#d01010"/>
 <!-- blue arrow -->
 <rect x="545.5" y="462" width="6" height="70" fill="url(#bg)"/>
 <path d="M545.5 462 L548.5 454.5 L554.5 468.5 L551.5 468.5 Z" fill="#1c1cd8"/>
 <!-- green arrow -->
 <rect x="551" y="532" width="67" height="5" fill="url(#gg)"/>
 <path d="M616 529.5 L627.5 534.5 L616 539 Z" fill="#0c8a0c"/>
 <circle cx="547.5" cy="536.5" r="5" fill="url(#rg)"/>
</svg>
<div id="rightp" class="a">
  <div class="a" style="left:4px;top:0;width:258px;height:722px;background:#fff"></div>
  <div class="a" style="left:4px;top:742px;width:258px;height:30px;background:#fff"></div>
  <div class="a" style="left:14px;top:728.5px;width:243px;height:7.5px;border-radius:0 4px 4px 0;background:linear-gradient(#8a8a8a,#b4b4b4 60%,#c8c8c8)"></div>
  <div class="a" style="left:5.5px;top:725px;width:15px;height:15px;border-radius:50%;background:#e8e8f8;border:1.5px solid #3a3a48"></div>
</div>
<div id="status" class="a">
  <div class="a" style="left:1px;top:0;width:52px;height:27px;border:1px solid #3e3e3e;border-top:none;background:#575757"></div>
  <span class="a" style="left:14px;top:7px;font-size:11.5px;color:#b8b8b8">Main</span>
  <div class="a" style="left:1420px;top:8px;width:13px;height:13px;border-radius:50%;background:radial-gradient(circle at 45% 40%,#5ad35a,#0f8a0f 55%,#064006);border:1px solid #1a3a1a"></div>
</div>
<div id="taskbar" class="a">
  <div class="a" style="left:0;top:0;width:1440px;height:4px;background:linear-gradient(#3a78e8,#4a8cf6)"></div>
  <!-- start -->
  <div class="a" style="left:0;top:4px;width:95px;height:30px;border-radius:0 10px 10px 0;background:linear-gradient(#5cc05c,#3aaa3a 20%,#34a234 75%,#2a8a2a);box-shadow:inset -3px 0 4px #1c6a1c"></div>
  <svg class="a" style="left:10px;top:875px;left:10px;top:10px" width="20" height="20" viewBox="0 0 20 20">
   <path d="M2 3 Q5 1 9 3 L8 9 Q4.5 7.5 1 9 Z" fill="#e8572a"/>
   <path d="M10 3.5 Q14 5 18 3 L17 9.5 Q13 11 9 9.5 Z" fill="#6cbd2a"/>
   <path d="M1 10 Q4.5 8.5 8 10 L7 16 Q3.5 14.5 0 16 Z" fill="#3a86e6"/>
   <path d="M9 10.5 Q13 12 17 10.5 L16 17 Q12 18.5 8 17 Z" fill="#f6c61a"/>
  </svg>
  <span class="a" style="left:35px;top:9px;font-size:17px;font-weight:bold;font-style:italic;color:#fff;text-shadow:1px 1px 1px #1a4a1a">пуск</span>
  <!-- quick launch dots -->
  <svg class="a" style="left:104px;top:8px" width="5" height="24"><g fill="#1233a8"><rect x="0" y="1" width="2" height="2"/><rect x="2" y="5" width="2" height="2"/><rect x="0" y="9" width="2" height="2"/><rect x="2" y="13" width="2" height="2"/><rect x="0" y="17" width="2" height="2"/><rect x="2" y="21" width="2" height="2"/></g></svg>
  <svg class="a" style="left:261px;top:8px" width="5" height="24"><g fill="#1233a8"><rect x="0" y="1" width="2" height="2"/><rect x="2" y="5" width="2" height="2"/><rect x="0" y="9" width="2" height="2"/><rect x="2" y="13" width="2" height="2"/><rect x="0" y="17" width="2" height="2"/><rect x="2" y="21" width="2" height="2"/></g></svg>
  <svg class="a" style="left:1219px;top:8px" width="5" height="24"><g fill="#1233a8"><rect x="0" y="1" width="2" height="2"/><rect x="2" y="5" width="2" height="2"/><rect x="0" y="9" width="2" height="2"/><rect x="2" y="13" width="2" height="2"/><rect x="0" y="17" width="2" height="2"/><rect x="2" y="21" width="2" height="2"/></g></svg>
  <!-- quick launch icons -->
  <svg class="a" style="left:110px;top:4px" width="150" height="30" viewBox="110 870 150 30">
   <circle cx="125.7" cy="884.8" r="6.8" fill="#f2b01a" stroke="#2a1800" stroke-width="1.6"/>
   <path d="M122.3 888.5 L125.7 881 L129.1 888.5 Z" fill="#4a2a08"/>
   <circle cx="126" cy="885.5" r="1.2" fill="#c8a060"/>
   <path d="M148 884.5 m-5.5 0 a5.5 4.8 0 1 0 11 0 a5.5 4.8 0 1 0 -11 0" fill="none" stroke="#2eaaf0" stroke-width="2.6"/>
   <path d="M143.5 884 H153.5" stroke="#2eaaf0" stroke-width="1.6"/>
   <path d="M143 892 Q139 886 147 880 Q154 876 156.5 877.5" fill="none" stroke="#f0c050" stroke-width="1.8"/>
   <rect x="164.5" y="879" width="15" height="12" fill="#3a6fd0" stroke="#d8e4f0" stroke-width="1"/>
   <rect x="165.5" y="888" width="13" height="2" fill="#1a2a50"/>
   <circle cx="195" cy="885" r="7" fill="#f4f4f4"/>
   <path d="M191.5 880.5 L195 885 L198.5 880.5 M195 885 V890" fill="none" stroke="#e02020" stroke-width="2"/>
   <circle cx="217.8" cy="885" r="7" fill="#6cc030"/>
   <path d="M215 880 V887 Q215 889 217.5 889 Q220 889 220 887 V880" fill="none" stroke="#fff" stroke-width="2"/>
   <path d="M235 878 L241 891 L247 878" fill="none" stroke="#f29a2a" stroke-width="3"/>
   <circle cx="243" cy="889" r="2.5" fill="#111"/>
  </svg>
  <!-- task buttons -->
  <div class="a" style="left:271px;top:8px;width:157px;height:25px;border-radius:3px;background:linear-gradient(#4a93f8,#3c81f3 20%,#3a7ef0);border:1px solid #2a62d0"></div>
  <svg class="a" style="left:279px;top:12px" width="16" height="16" viewBox="0 0 16 16"><circle cx="8" cy="8" r="7.5" fill="#f4f4f4"/><path d="M4.5 3.5 L8 8 L11.5 3.5 M8 8 V13" fill="none" stroke="#e02020" stroke-width="2"/></svg>
  <span class="a" style="left:299px;top:12.5px;font-size:12px;letter-spacing:-0.5px;color:#fff">Работа с программо...</span>
  <div class="a" style="left:431px;top:8px;width:158px;height:25px;border-radius:3px;background:#1e4ec6;border:1px solid #1a3a9a;box-shadow:inset 1px 1px 2px #123080"></div>
  <svg class="a" style="left:441px;top:12px" width="16" height="16" viewBox="0 0 16 16"><path d="M2 9 L5 4 L10 5 L14 3 L12 8 L14 12 L8 12 L3 13 Z" fill="#2a3a6a" stroke="#9aa6c8" stroke-width="1"/></svg>
  <span class="a" style="left:460px;top:12.5px;font-size:11.5px;letter-spacing:-0.55px;color:#fff">PlanetCNC</span>
  <span class="a" style="left:1231px;top:12.5px;font-size:11.5px;color:#fff">RL</span>
  <!-- tray -->
  <div class="a" style="left:1257px;top:4px;width:183px;height:30px;background:linear-gradient(#18a8f8,#0c8fe8 50%,#0a86de);border-left:1px solid #0a5ab8"></div>
  <svg class="a" style="left:1258px;top:4px" width="182" height="30" viewBox="1258 870 182 30">
   <rect x="1268" y="876" width="15" height="15" fill="#f0f0f0"/>
   <text x="1275.5" y="883" font-family="Liberation Sans" font-size="7" font-weight="bold" text-anchor="middle" fill="#1a2a60">CNC</text>
   <path d="M1269 885 H1282 M1270 885 V890 M1273 885 V890 M1276 885 V890 M1279 885 V890" stroke="#1a2a60" stroke-width="1.2"/>
   <ellipse cx="1294" cy="885" rx="5.5" ry="6.5" fill="#eef8d0" stroke="#6cc030" stroke-width="1.5" transform="rotate(30 1294 885)"/>
   <path d="M1306 878 L1318 890 M1318 878 L1306 890" stroke="#f06a1a" stroke-width="3"/>
   <circle cx="1311.5" cy="884" r="3.5" fill="#f6f6f6"/>
   <circle cx="1329" cy="884" r="6" fill="#707070" stroke="#c0c0c0" stroke-width="1"/>
   <circle cx="1329" cy="884" r="2.5" fill="#202020"/>
   <circle cx="1348.5" cy="884.5" r="7" fill="#76c03a"/>
   <path d="M1346 880 V887 Q1346 889 1348.5 889 Q1351 889 1351 887 V880" fill="none" stroke="#fff" stroke-width="2"/>
   <path d="M1360 881 H1363 L1367 877 V892 L1363 888 H1360 Z" fill="#e05a30" stroke="#222" stroke-width="0.8"/>
   <path d="M1369 880 Q1372 884.5 1369 889" fill="none" stroke="#222" stroke-width="1.2"/>
   <rect x="1378" y="879" width="14" height="11" fill="#5aa020"/>
   <path d="M1380 885 Q1385 879 1390 885 Q1385 890 1380 885" fill="none" stroke="#c8f080" stroke-width="1.2"/>
  </svg>
  <span class="a" style="left:1401px;top:12.5px;font-size:12px;color:#fff">0:16</span>
</div>
<!-- tooltip -->
<div class="a" style="left:38px;top:853px;width:208px;height:17px;background:#ffffe1;border:1px solid #000;font-size:12px;letter-spacing:-0.38px;line-height:15px;color:#000;padding-left:2px;white-space:nowrap;overflow:hidden">Начните работу с нажатия этой кнопки</div>
</body></html>
